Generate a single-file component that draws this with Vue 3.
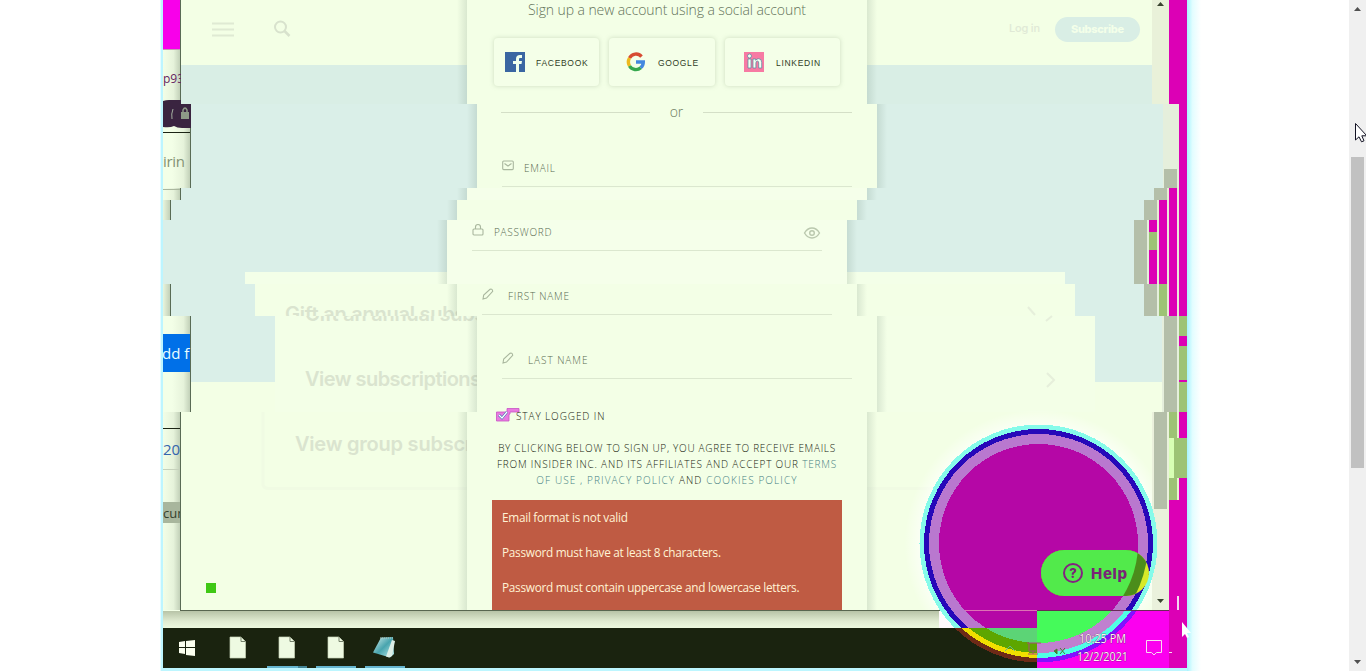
<script setup>
const bands = [
  { y: 0, h: 104, x: 181, m: 467 },
  { y: 104, h: 84, x: 191, m: 477 },
  { y: 188, h: 12, x: 181, m: 467 },
  { y: 200, h: 20, x: 171, m: 457 },
  { y: 220, h: 64, x: 161, m: 447 },
  { y: 284, h: 32, x: 171, m: 457 },
  { y: 316, h: 96, x: 191, m: 477 },
  { y: 412, h: 198, x: 181, m: 467 }
]
const cards = [
  [245, 272, 12, '#f3ffe8'], [255, 284, 32, '#f3ffe6'], [275, 316, 96, '#f3ffe7']
]
const M = '#dc00b5'
const G = '#9dc375'
const T = '#b4bfa9'
const edges = [
  [1152, 0, 17, 104, '#e9f1d9'], [1169, 0, 18, 104, M],
  [1163, 104, 16, 84, '#e5efdc'], [1179, 104, 8, 212, M], [1164, 169, 13, 19, T],
  [1154, 188, 13, 12, T], [1167, 188, 12, 128, '#e8ead6'], [1169, 188, 8, 128, M],
  [1144, 200, 13, 20, T], [1157, 200, 10, 84, '#e8ead6'], [1159, 200, 8, 84, M],
  [1134, 220, 13, 64, T], [1147, 220, 10, 64, '#e5efdc'], [1149, 220, 8, 12, M],
  [1149, 232, 8, 18, G], [1149, 250, 8, 34, M],
  [1144, 284, 13, 32, T], [1157, 284, 2, 32, '#e5efdc'], [1159, 284, 8, 32, G],
  [1162, 316, 17, 96, '#e5efdc'], [1164, 316, 13, 96, T], [1179, 316, 8, 96, G],
  [1179, 336, 8, 10, M], [1179, 380, 8, 2, M],
  [1152, 412, 17, 198, '#eaf1dc'], [1154, 412, 13, 97, T],
  [1169, 412, 18, 88, '#e6f4cf'], [1169, 412, 8, 26, G], [1179, 412, 8, 26, M],
  [1169, 438, 5, 40, '#d8ffb4'], [1174, 438, 13, 40, G],
  [1169, 478, 8, 22, G], [1179, 478, 8, 22, M], [1169, 500, 18, 168, M],
  [1177, 596, 2, 14, '#f3d8ef']
]
const rings = [
  { r: 119, a: '#86fbea', b: '#6d2a17', c: '#8211ff' },
  { r: 114.5, a: '#2708b9', b: '#f0df00', c: '#50ffe5' },
  { r: 109.5, a: '#b978cf', b: '#5da600', c: '#c080cf' },
  { r: 99.5, a: '#b507a6', b: '#5cd476', c: '#45fa5a' }
]
const fields = [
  { name: 'EMAIL', icon: 'mail', cls: 'email' },
  { name: 'PASSWORD', icon: 'lock', cls: 'password' },
  { name: 'FIRST NAME', icon: 'pen', cls: 'first' },
  { name: 'LAST NAME', icon: 'pen', cls: 'last' }
]
const errors = ['Email format is not valid', 'Password must have at least 8 characters.', 'Password must contain uppercase and lowercase letters.']
</script>

<template>
  <div class="page">
    <svg class="scene" width="1366" height="671" viewBox="0 0 1366 671">
      <defs>
        <linearGradient id="shR"><stop offset="0" stop-color="#53664e" stop-opacity="0" /><stop offset=".6" stop-color="#53664e" stop-opacity=".08" /><stop offset="1" stop-color="#53664e" stop-opacity=".34" /></linearGradient>
        <linearGradient id="shM"><stop offset="0" stop-color="#65806e" stop-opacity="0" /><stop offset="1" stop-color="#65806e" stop-opacity=".18" /></linearGradient>
        <linearGradient id="shN"><stop offset="0" stop-color="#65806e" stop-opacity=".18" /><stop offset="1" stop-color="#65806e" stop-opacity="0" /></linearGradient>
        <linearGradient id="shB" x2="0" y2="1"><stop offset="0" stop-color="#b7c3a7" /><stop offset=".6" stop-color="#e0ebd1" /><stop offset="1" stop-color="#edf9df" /></linearGradient>
        <linearGradient id="cyR"><stop offset="0" stop-color="#a6f4ff" /><stop offset=".4" stop-color="#e3fdff" /><stop offset="1" stop-color="#fff" /></linearGradient>
        <linearGradient id="note" x2="1" y2="1"><stop offset="0" stop-color="#d7f0ed" /><stop offset=".5" stop-color="#48a4ae" /><stop offset="1" stop-color="#c0eeee" /></linearGradient>
        <radialGradient id="halo"><stop offset=".85" stop-color="#fff" /><stop offset="1" stop-color="#fff" stop-opacity="0" /></radialGradient>
        <clipPath id="winClip"><rect x="163" y="0" width="1024" height="610" /></clipPath>
        <clipPath id="cA"><rect x="900" y="400" width="287" height="228" /></clipPath>
        <clipPath id="cB"><rect x="900" y="628" width="137" height="40" /></clipPath>
        <clipPath id="cC"><rect x="1037" y="610" width="132" height="58" /></clipPath>
        <clipPath id="leftA"><rect x="163" y="0" width="18" height="104" /></clipPath>
        <clipPath id="leftB"><rect x="163" y="104" width="28" height="308" /></clipPath>
        <clipPath id="leftC"><rect x="163" y="412" width="17" height="198" /></clipPath>
        <clipPath id="giftA"><rect x="255" y="284" width="202" height="32" /></clipPath>
        <clipPath id="giftB"><rect x="275" y="316" width="202" height="30" /></clipPath>
        <clipPath id="pill"><rect x="1041" y="550" width="108" height="46" rx="23" /></clipPath>
        <clipPath id="inner"><circle cx="1038.5" cy="543.5" r="99.5" /></clipPath>
        <clipPath id="mid"><circle cx="1038.5" cy="543.5" r="109.5" /></clipPath>
      </defs>
      <rect x="161" y="0" width="2" height="671" fill="#bdf5ff" /><rect x="160" y="0" width="1" height="671" fill="#e5fcff" />
      <rect x="1187" y="0" width="14" height="671" fill="url(#cyR)" />
      <rect x="163" y="668" width="1024" height="3" fill="#bdf6ff" />
      <rect x="163" y="0" width="1024" height="628" fill="#f3ffe7" />

      <g shape-rendering="crispEdges" clip-path="url(#winClip)">
        <template v-for="b in bands" :key="b.y">
          <rect :x="b.x - 19" :y="b.y" width="19" :height="b.h" fill="url(#shR)" />
          <rect :x="b.x" :y="b.y" :width="1187 - b.x" :height="b.h" fill="#f3ffe5" />
          <rect v-if="b.y < 382" :x="b.x" :y="Math.max(b.y, 65)" :width="971" :height="Math.min(382, b.y + b.h) - Math.max(b.y, 65)" :fill="b.y ? '#daefe8' : '#d9eee5'" />
          <rect v-if="b.y && b.y < 382" :x="b.x + 965" :y="b.y" width="22" :height="Math.min(382, b.y + b.h) - b.y" fill="#daefe8" />
          <rect :x="b.x - 1" :y="b.y" width="1" :height="b.h" fill="#596b55" />
        </template>
        <rect v-for="c in cards" :key="c[1]" :x="c[0]" :y="c[1]" width="820" :height="c[2]" :fill="c[3]" />
      </g>
      <path d="M263 412V485Q264 488.500 269 488.500H1080" fill="none" stroke="#f0fbe3" stroke-width="3" />

      <g class="brand" fill="#dae4cf">
        <g clip-path="url(#giftA)"><text x="285" y="321" textLength="192">Gift an annual subsc</text></g>
        <g clip-path="url(#giftB)"><text x="305" y="321" textLength="192">Gift an annual subsc</text></g>
        <text x="305" y="386" textLength="176">View subscriptions</text>
        <text x="295" y="451" textLength="183">View group subscri</text>
      </g>
      <path d="M1028 307l7 8M1046 321l6-5M1047 373l7 7-7 7" fill="none" stroke="#e6efdb" stroke-width="2" />

      <g shape-rendering="crispEdges">
        <template v-for="b in bands" :key="b.m + b.y">
          <rect :x="b.m - 10" :y="b.y" width="10" :height="b.h" fill="url(#shM)" />
          <rect :x="b.m + 400" :y="b.y" width="10" :height="b.h" fill="url(#shN)" />
          <rect :x="b.m" :y="b.y" width="400" :height="b.h" :fill="b.h === 12 || b.h === 64 ? '#f5ffea' : '#f3ffe6'" />
        </template>
      </g>

      <path d="M212 23.5h22M212 29.5h22M212 35.5h22" stroke="#dfead3" stroke-width="2" />
      <g fill="none" stroke="#d8e2cd" stroke-width="2"><circle cx="280.5" cy="27" r="5.5" /><path d="M284.5 31l5 5" stroke-width="2.5" /></g>
      <text class="login" x="1009" y="32" textLength="31">Log in</text>
      <rect x="1055" y="17" width="85" height="25" rx="12.5" fill="#d9eee5" />
      <text class="subscribe" x="1071" y="33" textLength="53">Subscribe</text>

      <circle cx="1038.5" cy="543.5" r="134" fill="url(#halo)" clip-path="url(#cA)" opacity=".75" />
      <g shape-rendering="crispEdges">
        <rect x="163" y="611" width="776" height="17" fill="url(#shB)" />
        <rect x="939" y="611" width="98" height="17" fill="#fffafc" />
        <rect v-for="(e, i) in edges" :key="i" :x="e[0]" :y="e[1]" :width="e[2]" :height="e[3]" :fill="e[4]" />
        <rect x="180" y="610" width="989" height="1" fill="#586650" />
        <rect x="163" y="628" width="874" height="40" fill="#1a230f" />
      </g>
      <path d="M1157 6h7l-3.5-4zM1157 599h7l-3.5 4z" fill="#39442f" />

      <g shape-rendering="crispEdges">
        <rect x="163" y="0" width="17" height="49" fill="#f800ea" /><rect x="163" y="49" width="17" height="1" fill="#c39ab2" />
        <rect x="163" y="132" width="27" height="1" fill="#1b2415" />
        <rect x="163" y="189" width="17" height="1" fill="#aab79e" />
        <rect x="163" y="334" width="27" height="38" fill="#0070e8" />
        <rect x="163" y="428" width="17" height="1" fill="#1b2415" /><rect x="163" y="469" width="17" height="1" fill="#c6d2bc" />
        <rect x="163" y="502" width="17" height="21" fill="#a8b69d" />
      </g>
      <path d="M163 101q3-1 6-1h12v4h10v24h-9q-5 0-8-2-4 2-11 1z" fill="#3a2440" />
      <rect x="181" y="112" width="8" height="7" fill="#8e9a87" /><path d="M183 112v-2q2-4 4 0v2" fill="none" stroke="#8e9a87" stroke-width="1.5" /><path d="M173 109q-2 5-1 10" stroke="#a4afa0" fill="none" />
      <g class="side">
        <g clip-path="url(#leftA)"><text x="163" y="83" font-size="12" fill="#652461">p93</text></g>
        <g clip-path="url(#leftB)"><text x="163" y="167" font-size="15" fill="#849274" textLength="22">irin</text><text x="162" y="359" font-size="15" fill="#eaffff">dd f</text></g>
        <g clip-path="url(#leftC)"><text x="163" y="455" font-size="15" fill="#3565ae">20</text><text x="163" y="518" font-size="13" fill="#34412c">cum</text></g>
      </g>
      <rect x="206" y="583" width="10" height="10" fill="#3fc814" />

      <path d="M179 642l6-1v6h-6zm7-1l9-1v7h-9zm-7 7h6v6l-6-1zm7 0h9v8l-9-1z" fill="#fbffef" />
      <path v-for="x in [230, 279, 328]" :key="x" :transform="`translate(${x} 637)`" d="M0 0h11l4.5 4.5V21H0z" fill="#eefae2" stroke="#c7d3b8" stroke-width=".7" />
      <path v-for="x in [230, 279, 328]" :key="x + 'f'" :transform="`translate(${x} 637)`" d="M11 0v4.5h4.5" fill="none" stroke="#74816b" />
      <path d="M381 637.500l12-.5 1 17-4 3.500-17-5z" fill="url(#note)" /><path d="M392 640l3 1-3 15-3 1.500-3-1z" fill="#dceee6" /><path d="M380 638h13" stroke="#b7c9bf" stroke-dasharray="1 1" />
      <path d="M267 667h39M316 667h40M365 667h40" stroke="#65b4ce" stroke-width="2" />
      <path d="M298 667h9" stroke="#438495" stroke-width="2" />

      <g clip-path="url(#cA)" shape-rendering="crispEdges"><circle v-for="r in rings" :key="r.r" cx="1038.5" cy="543.5" :r="r.r" :fill="r.a" /></g>
      <g clip-path="url(#cB)" shape-rendering="crispEdges"><circle v-for="r in rings" :key="r.r" cx="1038.5" cy="543.5" :r="r.r" :fill="r.b" /></g>
      <rect x="1037" y="611" width="132" height="57" fill="#fb00ef" />
      <g clip-path="url(#cC)" shape-rendering="crispEdges"><circle v-for="r in rings" :key="r.r" cx="1038.5" cy="543.5" :r="r.r" :fill="r.c" /></g>
      <path d="M965 610.5h72" stroke="#dd72b4" /><path d="M1037 610.5h132" stroke="#6a2a56" />
      <g clip-path="url(#pill)">
        <rect x="1041" y="550" width="108" height="46" fill="#d8ea28" />
        <rect x="1041" y="550" width="108" height="46" fill="#4b8d1b" clip-path="url(#mid)" />
        <rect x="1041" y="550" width="108" height="46" fill="#52ea4b" clip-path="url(#inner)" />
      </g>
      <circle cx="1073" cy="573" r="9" fill="none" stroke="#842181" stroke-width="2" />
      <text class="help" x="1069.2" y="578" font-size="13">?</text>
      <text class="help" x="1091" y="579" font-size="15" textLength="36">Help</text>
      <path d="M1005 651l5-5 5 5" fill="none" stroke="#64b58d" /><path d="M1027 643h14M1029 643v8h7M1028 654h10M1033 651v3" stroke="#a64c77" fill="none" />
      <path d="M1054 651l3-2v5zM1060 648l5 6M1065 648l-5 6" stroke="#487d30" fill="#467e35" />
      <g class="clock"><text x="1079" y="643" textLength="47" lengthAdjust="spacingAndGlyphs">10:25 PM</text><text x="1077" y="661" textLength="51" lengthAdjust="spacingAndGlyphs">12/2/2021</text></g>
      <path d="M1146.500 640.500h15v12h-5l-2.500 2.500-2.500-2.500h-5zM1169 652.500h3" fill="none" stroke="#f5dff0" />
      <path d="M1182 622v15l3-3 2 4 2-1-2-4h4z" fill="#fff" />

      <rect x="1349" y="0" width="17" height="671" fill="#f0f0f0" />
      <rect x="1351" y="157" width="13" height="311" fill="#c1c1c1" />
      <path d="M1354 11h7l-3.500-4z" fill="#505050" /><path d="M1354 660h7l-3.500 4z" fill="#505050" />
      <path d="M1355.500 123.500v16.500l3.500-3.200 2.500 5 2.500-1-2.200-5h5z" fill="#fff" stroke="#111122" />
    </svg>

    <main class="form">
      <h1>Sign up a new account using a social account</h1>
      <div class="social">
        <button class="facebook"><svg width="20" height="20" viewBox="0 0 20 20"><path fill="#3a66a2" d="M0 0h20v20H0z" /><path fill="#f0ffed" d="M11 20v-8H8V9h3V7q0-4 4-4h2v3h-2q-1 0-1 1v2h3l-.5 3H14v8z" /></svg><span>FACEBOOK</span></button>
        <button class="google"><svg width="20" height="20" viewBox="0 0 20 20"><g fill="none" stroke-width="3.400"><path stroke="#d74b32" d="M3.500 6A7.300 7.300 0 0 1 15.500 4.600" /><path stroke="#edb91e" d="M3.500 6a8 8 0 0 0 0 8" /><path stroke="#35a84d" d="M3.500 14a7.400 7.400 0 0 0 11.300 1.700" /><path stroke="#4388df" d="M10 10h7.300q0 3.700-2.700 5.700" /></g></svg><span>GOOGLE</span></button>
        <button class="linkedin"><svg width="20" height="20" viewBox="0 0 20 20"><path fill="#f77aa3" d="M0 0h20v20H0z" /><g fill="#f5fff0" stroke="#4b8aa0" stroke-width=".7"><circle cx="5.500" cy="4" r="2" /><path d="M4 7h3v9H4zM9 7h2.700v1.300q1-1.600 3-1.600 3 0 3 3.800V16h-3v-5q0-2-1.300-2-1.500 0-1.500 2v5H9z" /></g></svg><span>LINKEDIN</span></button>
      </div>
      <div class="or"><i></i><span>or</span><i></i></div>
      <div v-for="f in fields" :key="f.name" class="field" :class="f.cls">
        <svg v-if="f.icon === 'mail'" width="12" height="14" viewBox="0 0 12 14"><rect x=".7" y="2" width="10.600" height="8.600" rx="1" /><path d="M2.500 4.500l3.500 2.500 3.500-2.500" /></svg>
        <svg v-else-if="f.icon === 'lock'" width="12" height="14" viewBox="0 0 12 14"><rect x="1" y="6" width="10" height="6" rx="1" /><path d="M3.500 6V4q0-2.500 2.500-2.500T8.500 4v2" /></svg>
        <svg v-else width="12" height="14" viewBox="0 0 12 14"><path d="M1 12l.7-4L8 2.300Q10.500 1.500 10.700 4.300L4.500 11z" /></svg>
        <span>{{ f.name }}</span>
        <svg v-if="f.icon === 'lock'" class="eye" width="18" height="14" viewBox="0 0 18 14"><path d="M1.500 7q3-5 7.500-5t7.500 5q-3 5-7.500 5T1.500 7z" /><circle cx="9" cy="7" r="2.300" /></svg>
      </div>
      <label class="stay"><svg width="24" height="14" viewBox="0 0 24 14"><path d="M.5 4H11V.5h12V4h-9v2l-1 .5V13H.5z" fill="#e97be0" stroke="#c653c5" stroke-width=".8" /><path d="M3 7l3 3 5-6" fill="none" stroke="#397bad" stroke-width="2.500" /><path d="M3 7l3 3 5-6" fill="none" stroke="#fff" stroke-width="1.200" /></svg><span>STAY LOGGED IN</span></label>
      <p class="legal"><span class="l1">BY CLICKING BELOW TO SIGN UP, YOU AGREE TO RECEIVE EMAILS</span><span class="l2">FROM INSIDER INC. AND ITS AFFILIATES AND ACCEPT OUR <a>TERMS</a></span><span><a>OF USE , PRIVACY POLICY</a> AND <a>COOKIES POLICY</a></span></p>
      <div class="errors"><p v-for="e in errors" :key="e">{{ e }}</p></div>
    </main>
  </div>
</template>

<style>
body { overflow: hidden; background: #fff; }
</style>

<style scoped>
.page { display: grid; width: 1366px; height: 671px; overflow: hidden; font-family: "Open Sans", "Noto Sans", sans-serif; }
.scene, .form { grid-area: 1 / 1; }
.scene { display: block; }
.brand { font: 600 20px Inter, "Liberation Sans", sans-serif; }
.side { font-family: "Open Sans", sans-serif; }
.login { font: 500 11px Inter, sans-serif; fill: #e0e9d6; }
.subscribe { font: 800 11px Inter, sans-serif; fill: #f3ffe9; }
.help { font-family: Inter, sans-serif; font-weight: 800; fill: #792476; }
.clock { font: 12px "Open Sans", sans-serif; fill: #fff4f1; stroke: #4d1653; stroke-width: .5px; paint-order: stroke; }
.form { display: flex; flex-direction: column; box-sizing: border-box; width: 350px; height: 610px; margin-left: 492px; }
h1 { flex: 0 0 20px; margin: 0; line-height: 19px; font-size: 14px; font-weight: 300; letter-spacing: -.09px; text-align: center; color: #63735a; white-space: nowrap; }
.social { display: flex; flex: 0 0 48px; gap: 10px; margin: 18px 0 0 2px; }
button { display: flex; align-items: center; box-sizing: border-box; height: 48px; border: 0; border-radius: 4px; padding: 0 0 0 11px; background: #f4ffe8; box-shadow: 0 0 4px #a9b99b80; font: 8.5px "Liberation Sans", sans-serif; letter-spacing: .7px; color: #303d26; }
button svg { flex-shrink: 0; }
button span { margin-left: 11px; padding-top: 2px; white-space: nowrap; }
.facebook { width: 105px; }
.google { width: 106px; padding-left: 17px; letter-spacing: .65px; }
.google span { margin-left: 12px; }
.linkedin { width: 115px; padding-left: 19px; }
.linkedin span { margin-left: 12px; }
.or { display: flex; flex: 0 0 14px; align-items: center; width: 351px; margin: 19px 0 4px 9px; font-size: 14px; font-weight: 300; line-height: 14px; color: #6d7c61; }
.or i { width: 149px; height: 1px; background: #d4dfc7; }
.or span { width: 54px; text-align: center; }
.field { display: flex; align-items: flex-end; box-sizing: border-box; flex: 0 0 64px; width: 350px; border-bottom: 1px solid #dbe7cf; padding-bottom: 11px; font-size: 10px; line-height: 14px; font-weight: 300; letter-spacing: .75px; color: #596b51; }
.field svg { fill: none; stroke: #a9b79e; stroke-width: 1.100; margin-bottom: 2px; }
.field span { margin-left: 10px; }
.field .eye { margin-left: auto; margin-right: 1px; margin-bottom: -1px; stroke: #bac8ae; stroke-width: 1.400; }
.email, .last { margin-left: 10px; }
.password { margin-left: -20px; }
.first { margin-left: -10px; }
.first span, .last span { margin-left: 14px; }
.last { letter-spacing: .95px; }
.stay { display: flex; flex: 0 0 16px; margin: 29px 0 0 4px; font-size: 10px; font-weight: 300; line-height: 16px; letter-spacing: .9px; color: #17240e; }
.stay svg { flex-shrink: 0; }
.stay span { margin-left: -4px; white-space: nowrap; }
.legal { display: flex; flex: 0 0 48px; flex-direction: column; align-items: center; width: 350px; margin: 16px 0 12px; font-size: 10px; font-weight: 300; line-height: 16px; letter-spacing: 1.100px; white-space: nowrap; color: #17240e; }
.l1 { letter-spacing: .7px; }
.l2 { letter-spacing: .81px; }
a { color: #477f83; }
.errors { box-sizing: border-box; width: 350px; flex: 0 0 110px; overflow: hidden; padding: 8px 10px 0; background: #bf5b43; color: #fff3d5; font-size: 11.8px; letter-spacing: -.28px; line-height: 18px; }
.errors p { margin: 0 0 17px; }
</style>
